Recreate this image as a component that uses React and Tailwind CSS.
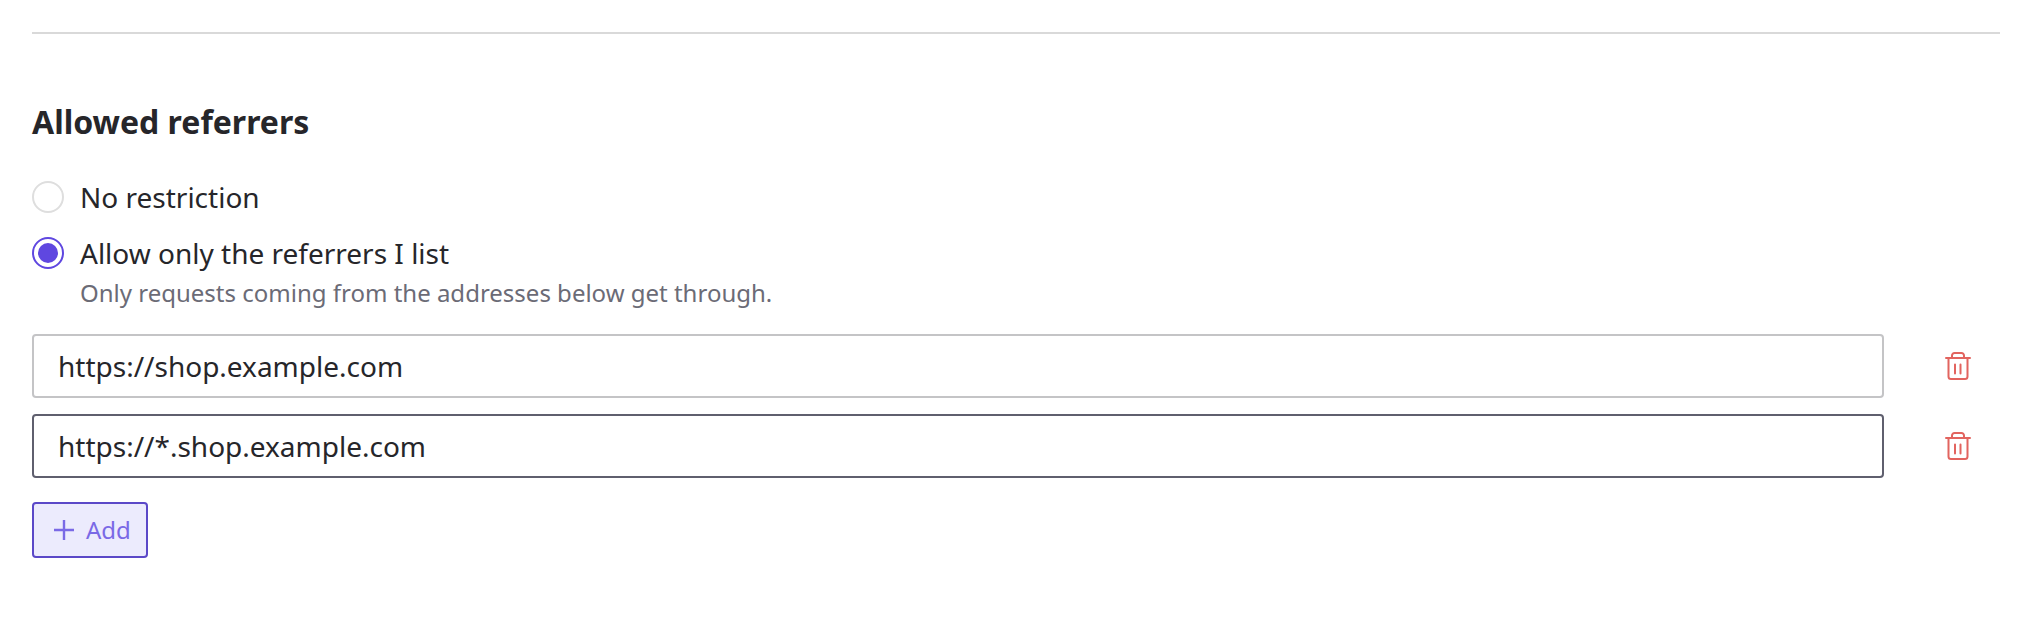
import React from 'react';

const urls = [
  { value: 'https://shop.example.com', border: 'border-[#c4c4c6]' },
  { value: 'https://*.shop.example.com', border: 'border-[#5f5f6e]' },
];

function TrashIcon() {
  return (
    <svg width="26" height="28" viewBox="0 0 26 28" fill="none" stroke="#e2645f" strokeWidth="2" strokeLinecap="round" strokeLinejoin="round">
      <path d="M1 6h24" />
      <path d="M7 6V3.5A2.5 2.5 0 0 1 9.5 1h7A2.5 2.5 0 0 1 19 3.5V6" />
      <path d="M3.5 6v18.5A2.5 2.5 0 0 0 6 27h14a2.5 2.5 0 0 0 2.5-2.5V6" />
      <path d="M10 12.5v9M15.5 12.5v9" />
    </svg>
  );
}

function Radio({ checked }) {
  return checked ? (
    <span className="w-8 h-8 shrink-0 rounded-full border-2 border-[#5f47e0] flex items-center justify-center">
      <span className="w-5 h-5 rounded-full bg-[#5f47e0]" />
    </span>
  ) : (
    <span className="w-8 h-8 shrink-0 rounded-full border-2 border-[#dedede] bg-white" />
  );
}

export default function App() {
  return (
    <div className="w-[2032px] h-[630px] bg-white px-8 pt-8 overflow-hidden font-['Noto_Sans',sans-serif]">
      <div className="w-[1968px] h-0.5 bg-[#d9d9d9]" />

      <h2 className="mt-[67px] text-[32px] leading-[42px] font-bold text-[#26262a]">Allowed referrers</h2>

      <div className="mt-[38px] flex items-center gap-4 h-8">
        <Radio />
        <span className="text-[28px] leading-8 text-[#26262a]">No restriction</span>
      </div>

      <div className="mt-6 flex items-center gap-4 h-8">
        <Radio checked />
        <span className="text-[28px] leading-8 text-[#26262a]">Allow only the referrers I list</span>
      </div>
      <p className="ml-12 mt-[7px] text-[24px] leading-[34px] text-[#6b6b76]">Only requests coming from the addresses below get through.</p>

      <div className="mt-6 flex flex-col gap-4">
        {urls.map((u) => (
          <div key={u.value} className="flex items-center">
            <div className={`w-[1852px] h-16 rounded-[4px] border-2 ${u.border} pl-6 flex items-center text-[28px] text-[#26262a]`}>
              {u.value}
            </div>
            <button className="ml-[61px] flex"><TrashIcon /></button>
          </div>
        ))}
      </div>

      <button className="mt-6 w-[116px] h-14 rounded-[4px] border-2 border-[#5b48c8] bg-[#ecebfd] flex items-center gap-3 pl-5 text-[24px] text-[#7a69e6]">
        <svg width="20" height="20" viewBox="0 0 20 20" fill="none" stroke="#7a69e6" strokeWidth="2.4">
          <path d="M10 0v20M0 10h20" />
        </svg>
        Add
      </button>
    </div>
  );
}
